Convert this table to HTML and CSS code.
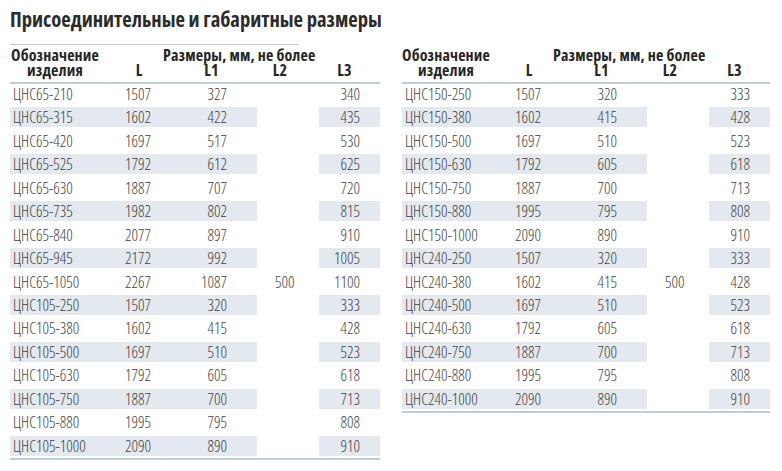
FILE: index.html
```html
<!DOCTYPE html>
<html lang="ru">
<head>
<meta charset="utf-8">
<title>Присоединительные и габаритные размеры</title>
<link rel="stylesheet" href="styles.css">
</head>
<body>
<div class="page">
  <h1 class="title">Присоединительные и габаритные размеры</h1>
  <div class="tables">
    <section class="panel panel-left">
      <div class="top-rule"></div>
      <div class="grid-wrap">
        <table class="dims">
          <colgroup><col class="w-name"><col class="w-l"><col class="w-l1"><col class="w-l2"><col class="w-l3"></colgroup>
          <thead>
            <tr>
              <th class="h-name">Обозначение</th>
              <th class="h-group" colspan="4">Размеры, мм, не более</th>
            </tr>
            <tr class="h-row2">
              <th class="h-name">изделия</th>
              <th class="h-l">L</th>
              <th class="h-l1">L1</th>
              <th class="h-l2">L2</th>
              <th class="h-l3">L3</th>
            </tr>
          </thead>
          <tbody>
            <tr><td class="c-name">ЦНС65-210</td><td class="c-l">1507</td><td class="c-l1">327</td><td class="c-l2"></td><td class="c-l3">340</td></tr>
            <tr><td class="c-name">ЦНС65-315</td><td class="c-l">1602</td><td class="c-l1">422</td><td class="c-l2"></td><td class="c-l3">435</td></tr>
            <tr><td class="c-name">ЦНС65-420</td><td class="c-l">1697</td><td class="c-l1">517</td><td class="c-l2"></td><td class="c-l3">530</td></tr>
            <tr><td class="c-name">ЦНС65-525</td><td class="c-l">1792</td><td class="c-l1">612</td><td class="c-l2"></td><td class="c-l3">625</td></tr>
            <tr><td class="c-name">ЦНС65-630</td><td class="c-l">1887</td><td class="c-l1">707</td><td class="c-l2"></td><td class="c-l3">720</td></tr>
            <tr><td class="c-name">ЦНС65-735</td><td class="c-l">1982</td><td class="c-l1">802</td><td class="c-l2"></td><td class="c-l3">815</td></tr>
            <tr><td class="c-name">ЦНС65-840</td><td class="c-l">2077</td><td class="c-l1">897</td><td class="c-l2"></td><td class="c-l3">910</td></tr>
            <tr><td class="c-name">ЦНС65-945</td><td class="c-l">2172</td><td class="c-l1">992</td><td class="c-l2"></td><td class="c-l3">1005</td></tr>
            <tr><td class="c-name">ЦНС65-1050</td><td class="c-l">2267</td><td class="c-l1">1087</td><td class="c-l2">500</td><td class="c-l3">1100</td></tr>
            <tr><td class="c-name">ЦНС105-250</td><td class="c-l">1507</td><td class="c-l1">320</td><td class="c-l2"></td><td class="c-l3">333</td></tr>
            <tr><td class="c-name">ЦНС105-380</td><td class="c-l">1602</td><td class="c-l1">415</td><td class="c-l2"></td><td class="c-l3">428</td></tr>
            <tr><td class="c-name">ЦНС105-500</td><td class="c-l">1697</td><td class="c-l1">510</td><td class="c-l2"></td><td class="c-l3">523</td></tr>
            <tr><td class="c-name">ЦНС105-630</td><td class="c-l">1792</td><td class="c-l1">605</td><td class="c-l2"></td><td class="c-l3">618</td></tr>
            <tr><td class="c-name">ЦНС105-750</td><td class="c-l">1887</td><td class="c-l1">700</td><td class="c-l2"></td><td class="c-l3">713</td></tr>
            <tr><td class="c-name">ЦНС105-880</td><td class="c-l">1995</td><td class="c-l1">795</td><td class="c-l2"></td><td class="c-l3">808</td></tr>
            <tr><td class="c-name">ЦНС105-1000</td><td class="c-l">2090</td><td class="c-l1">890</td><td class="c-l2"></td><td class="c-l3">910</td></tr>
          </tbody>
        </table>
      </div>
    </section>
    <section class="panel panel-right">
      <div class="top-rule top-rule-none"></div>
      <div class="grid-wrap">
        <table class="dims">
          <colgroup><col class="w-name"><col class="w-l"><col class="w-l1"><col class="w-l2"><col class="w-l3"></colgroup>
          <thead>
            <tr>
              <th class="h-name">Обозначение</th>
              <th class="h-group" colspan="4">Размеры, мм, не более</th>
            </tr>
            <tr class="h-row2">
              <th class="h-name">изделия</th>
              <th class="h-l">L</th>
              <th class="h-l1">L1</th>
              <th class="h-l2">L2</th>
              <th class="h-l3">L3</th>
            </tr>
          </thead>
          <tbody>
            <tr><td class="c-name">ЦНС150-250</td><td class="c-l">1507</td><td class="c-l1">320</td><td class="c-l2"></td><td class="c-l3">333</td></tr>
            <tr><td class="c-name">ЦНС150-380</td><td class="c-l">1602</td><td class="c-l1">415</td><td class="c-l2"></td><td class="c-l3">428</td></tr>
            <tr><td class="c-name">ЦНС150-500</td><td class="c-l">1697</td><td class="c-l1">510</td><td class="c-l2"></td><td class="c-l3">523</td></tr>
            <tr><td class="c-name">ЦНС150-630</td><td class="c-l">1792</td><td class="c-l1">605</td><td class="c-l2"></td><td class="c-l3">618</td></tr>
            <tr><td class="c-name">ЦНС150-750</td><td class="c-l">1887</td><td class="c-l1">700</td><td class="c-l2"></td><td class="c-l3">713</td></tr>
            <tr><td class="c-name">ЦНС150-880</td><td class="c-l">1995</td><td class="c-l1">795</td><td class="c-l2"></td><td class="c-l3">808</td></tr>
            <tr><td class="c-name">ЦНС150-1000</td><td class="c-l">2090</td><td class="c-l1">890</td><td class="c-l2"></td><td class="c-l3">910</td></tr>
            <tr><td class="c-name">ЦНС240-250</td><td class="c-l">1507</td><td class="c-l1">320</td><td class="c-l2"></td><td class="c-l3">333</td></tr>
            <tr><td class="c-name">ЦНС240-380</td><td class="c-l">1602</td><td class="c-l1">415</td><td class="c-l2">500</td><td class="c-l3">428</td></tr>
            <tr><td class="c-name">ЦНС240-500</td><td class="c-l">1697</td><td class="c-l1">510</td><td class="c-l2"></td><td class="c-l3">523</td></tr>
            <tr><td class="c-name">ЦНС240-630</td><td class="c-l">1792</td><td class="c-l1">605</td><td class="c-l2"></td><td class="c-l3">618</td></tr>
            <tr><td class="c-name">ЦНС240-750</td><td class="c-l">1887</td><td class="c-l1">700</td><td class="c-l2"></td><td class="c-l3">713</td></tr>
            <tr><td class="c-name">ЦНС240-880</td><td class="c-l">1995</td><td class="c-l1">795</td><td class="c-l2"></td><td class="c-l3">808</td></tr>
            <tr><td class="c-name">ЦНС240-1000</td><td class="c-l">2090</td><td class="c-l1">890</td><td class="c-l2"></td><td class="c-l3">910</td></tr>
          </tbody>
        </table>
      </div>
    </section>
  </div>
</div>
</body>
</html>
```

FILE: styles.css
```css
html, body {
  margin: 0;
  padding: 0;
  background: #ffffff;
}

.page {
  width: 782px;
  height: 471px;
  box-sizing: border-box;
  padding: 0 0 0 10px;
  font-family: "Open Sans", "Liberation Sans", sans-serif;
  font-stretch: 75%;
  font-variation-settings: "wdth" 75;
  color: #3f3f3f;
}

.title {
  margin: 0 0 13px 0;
  padding-top: 7px;
  font-size: 20.6px;
  line-height: 24px;
  font-weight: 700;
  color: #2b2b2b;
  white-space: nowrap;
}

.tables {
  display: flex;
  align-items: flex-start;
  gap: 22px;
}

.panel {
  display: flex;
  flex-direction: column;
}

.panel-left { width: 370px; }
.panel-right { width: 368px; }

.top-rule {
  width: 288px;
  height: 1px;
  background: #b9cad8;
}

.top-rule-none {
  background: transparent;
}

.grid-wrap {
  border-bottom: 2px solid #bccddb;
  padding-bottom: 2px;
}

.dims {
  width: 100%;
  border-collapse: separate;
  border-spacing: 0;
  table-layout: fixed;
}

.panel-left .w-name { width: 102px; }
.panel-right .w-name { width: 100px; }
.w-l { width: 54px; }
.w-l1 { width: 91px; }
.w-l2 { width: 62px; }
.w-l3 { width: 61px; }

.dims th,
.dims td {
  box-sizing: border-box;
  white-space: nowrap;
  overflow: visible;
}

.dims th {
  font-weight: 700;
  font-size: 16px;
  letter-spacing: 0.15px;
  line-height: 15px;
  color: #262626;
  padding: 0;
}

.dims thead tr:first-child th {
  padding-top: 3px;
  vertical-align: bottom;
}

.dims .h-row2 th {
  padding-bottom: 4px;
  border-bottom: 2px solid #bccddb;
}

.dims .h-name {
  text-align: center;
  padding-right: 12px;
}

.dims .h-group {
  text-align: left;
  padding-left: 51px;
}

.dims .h-l { text-align: center; }
.dims .h-l1 { text-align: center; }
.dims .h-l2 { text-align: center; padding-right: 16px; }
.dims .h-l3 { text-align: center; padding-right: 10px; }

.dims td {
  font-size: 16px;
  font-weight: 300;
  line-height: 20px;
  height: 23.45px;
  padding: 3.45px 0 0 0;
}

.dims tbody tr:first-child td {
  padding-top: 0;
  height: 20px;
}

.dims tbody tr:nth-child(even) td {
  background: linear-gradient(#e3e9ef, #e3e9ef) left bottom / 100% 20px no-repeat;
}

.dims tbody tr:nth-child(even) td.c-l2 {
  background: none;
}

.dims td.c-name { text-align: left; padding-left: 3px; }
.dims td.c-l { text-align: left; padding-left: 13px; }
.dims td.c-l1 { text-align: right; padding-right: 30px; }
.dims td.c-l2 { text-align: left; padding-left: 18px; }
.dims td.c-l3 { text-align: right; padding-right: 20px; }
```
